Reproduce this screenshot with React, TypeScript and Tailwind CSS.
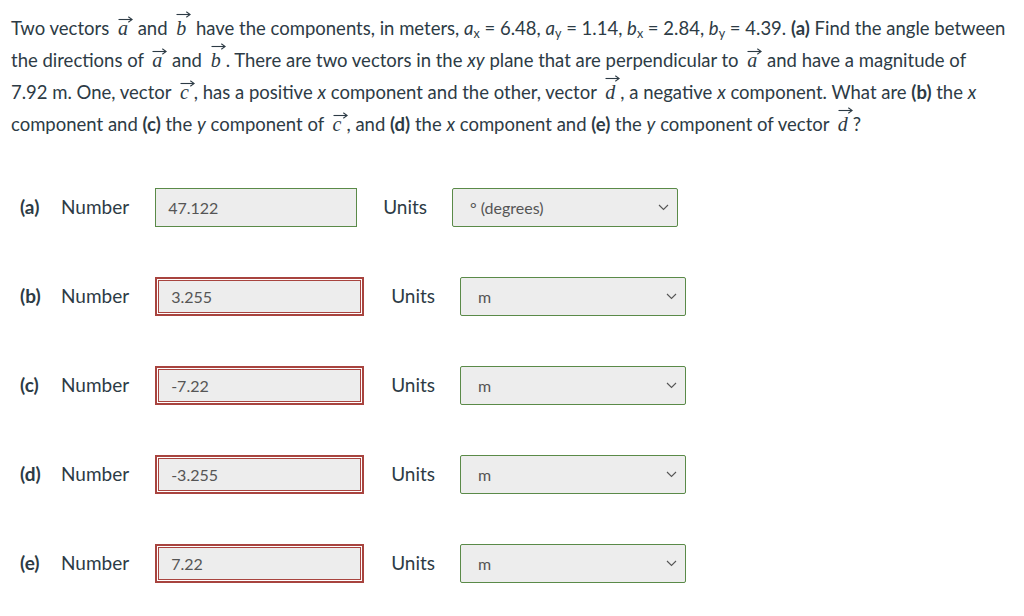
import React from "react";

const TEXT = "text-[#2d3b45]";

function Vec({ l, tall }: { l: string; tall?: boolean }) {
  return (
    <span className="relative inline-block ml-[4px] mr-[5px] leading-none">
      <span className="italic text-[20px]" style={{ fontFamily: '"Liberation Serif", serif' }}>
        {l}
      </span>
      <svg
        className={`absolute left-[0px] ${tall ? "top-[-7px]" : "top-[-2px]"}`}
        width="15"
        height="7"
        viewBox="0 0 15 7"
      >
        <path d="M0.5 3.5 H14" stroke="#2d3b45" strokeWidth="1.1" fill="none" />
        <path d="M10.3 0.8 L14.2 3.5 L10.3 6.2" stroke="#2d3b45" strokeWidth="1.1" fill="none" />
      </svg>
    </span>
  );
}

function Sub({ v, s }: { v: string; s: string }) {
  return (
    <span>
      <i>{v}</i>
      <sub className="text-[12.5px] not-italic">{s}</sub>
    </span>
  );
}

function Chevron() {
  return (
    <svg width="11" height="7" viewBox="0 0 11 7" className="shrink-0">
      <path d="M1 1 L5.5 5.5 L10 1" stroke="#555" strokeWidth="1.1" fill="none" />
    </svg>
  );
}

function Select({ value, ml }: { value: string; ml: string }) {
  return (
    <div
      className={`${ml} flex items-center justify-between w-[226px] h-[39px] border border-[#5a8a48] rounded-[2px] bg-[#ededed] pl-[17px] pr-[8px] text-[16px] text-[#555]`}
    >
      <span>{value}</span>
      <Chevron />
    </div>
  );
}

function Row({
  label,
  value,
  unit,
  error,
}: {
  label: string;
  value: string;
  unit: string;
  error?: boolean;
}) {
  return (
    <div className={`flex items-center h-[39px] ${TEXT} text-[19px]`}>
      <span className="font-bold w-[22px] ml-[20px]">{label}</span>
      <span className="ml-[19px]">Number</span>
      {error ? (
        <div className="ml-[26px] w-[209px] h-[39px] border-2 border-[#a8443f] p-px bg-white">
          <div className="w-full h-full border border-[#a8443f] bg-[#ededed] flex items-center pl-[12px] text-[16px] text-[#555]">
            {value}
          </div>
        </div>
      ) : (
        <div className="ml-[26px] w-[202px] h-[39px] border border-[#5a8a48] bg-[#ededed] flex items-center pl-[12px] text-[16px] text-[#555]">
          {value}
        </div>
      )}
      <span className={error ? "ml-[27px]" : "ml-[26px]"}>Units</span>
      <Select value={unit} ml="ml-[25px]" />
    </div>
  );
}

export default function App() {
  return (
    <div
      className={`w-[1024px] h-[616px] bg-white ${TEXT} overflow-hidden`}
      style={{ fontFamily: 'Lato, "Open Sans", sans-serif' }}
    >
      <p className="px-[11px] pt-[12px] text-[18.5px] leading-[32px] whitespace-nowrap">
        Two vectors <Vec l="a" /> and <Vec l="b" tall /> have the components, in meters,{" "}
        <Sub v="a" s="x" /> = 6.48, <Sub v="a" s="y" /> = 1.14, <Sub v="b" s="x" /> = 2.84,{" "}
        <Sub v="b" s="y" /> = 4.39. <b>(a)</b> Find the angle between
        <br />
        the directions of <Vec l="a" /> and <Vec l="b" tall />. There are two vectors in the{" "}
        <i>xy</i> plane that are perpendicular to <Vec l="a" /> and have a magnitude of
        <br />
        7.92 m. One, vector <Vec l="c" />, has a positive <i>x</i> component and the other, vector{" "}
        <Vec l="d" tall />, a negative <i>x</i> component. What are <b>(b)</b> the <i>x</i>
        <br />
        component and <b>(c)</b> the <i>y</i> component of <Vec l="c" />, and <b>(d)</b> the{" "}
        <i>x</i> component and <b>(e)</b> the <i>y</i> component of vector <Vec l="d" tall />?
      </p>
      <div className="mt-[48px] flex flex-col gap-[50px]">
        <Row label="(a)" value="47.122" unit="° (degrees)" />
        <Row label="(b)" value="3.255" unit="m" error />
        <Row label="(c)" value="-7.22" unit="m" error />
        <Row label="(d)" value="-3.255" unit="m" error />
        <Row label="(e)" value="7.22" unit="m" error />
      </div>
    </div>
  );
}
